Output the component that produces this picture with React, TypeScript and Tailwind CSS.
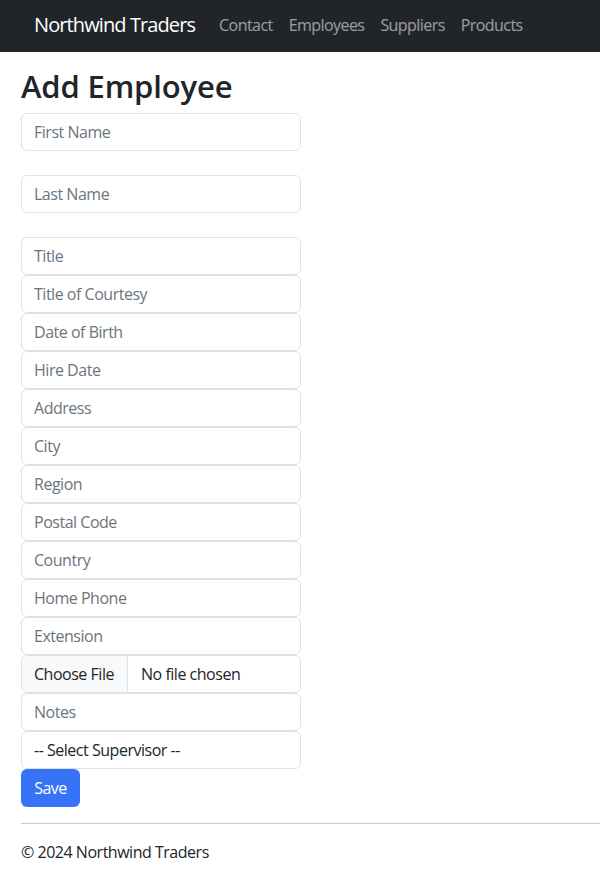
const navLinks = ["Contact", "Employees", "Suppliers", "Products"];

const stackedFields = [
  "Title",
  "Title of Courtesy",
  "Date of Birth",
  "Hire Date",
  "Address",
  "City",
  "Region",
  "Postal Code",
  "Country",
  "Home Phone",
  "Extension",
];

const inputClass =
  "block h-[38px] w-full rounded-[6px] border border-[#dee2e6] bg-white px-3 text-base tracking-[-0.03em] text-[#212529] placeholder:text-[#6c757d] outline-none";

export default function App() {
  return (
    <div className="min-h-screen bg-white font-['Open_Sans',sans-serif] tracking-[-0.03em] text-[#212529]">
      <nav className="flex h-[52px] items-center bg-[#212529] pb-[2px] pl-[34px]">
        <span className="mr-4 text-[20px] tracking-[-0.045em] text-white">
          Northwind Traders
        </span>
        <ul className="flex">
          {navLinks.map((link) => (
            <li key={link}>
              <a className="block px-2 text-base tracking-[-0.035em] text-white/55">
                {link}
              </a>
            </li>
          ))}
        </ul>
      </nav>

      <main className="pl-[21px] pt-4">
        <h1 className="mb-2 text-[31px] font-semibold leading-[1.2] tracking-[-0.005em]">
          Add Employee
        </h1>
        <form className="w-[280px]" onSubmit={(e) => e.preventDefault()}>
          <input className={inputClass} placeholder="First Name" />
          <span className="block h-6" />
          <input className={inputClass} placeholder="Last Name" />
          <span className="block h-6" />
          {stackedFields.map((field) => (
            <input key={field} className={inputClass} placeholder={field} />
          ))}
          <div className="flex h-[38px] w-full overflow-hidden rounded-[6px] border border-[#dee2e6] text-base">
            <span className="flex w-[106px] items-center border-r border-[#dee2e6] bg-[#f8f9fa] px-3">
              Choose File
            </span>
            <span className="flex items-center pl-[13px]">No file chosen</span>
          </div>
          <input className={inputClass} placeholder="Notes" />
          <select className={inputClass + " appearance-none"}>
            <option>-- Select Supervisor --</option>
          </select>
          <button
            type="submit"
            className="h-[38px] w-[59px] rounded-[6px] bg-[#3673f7] text-base text-white"
          >
            Save
          </button>
        </form>
        <hr className="mt-4 border-t border-[#c9c9c9]" />
        <footer className="py-4 text-base leading-6">© 2024 Northwind Traders</footer>
      </main>
    </div>
  );
}
